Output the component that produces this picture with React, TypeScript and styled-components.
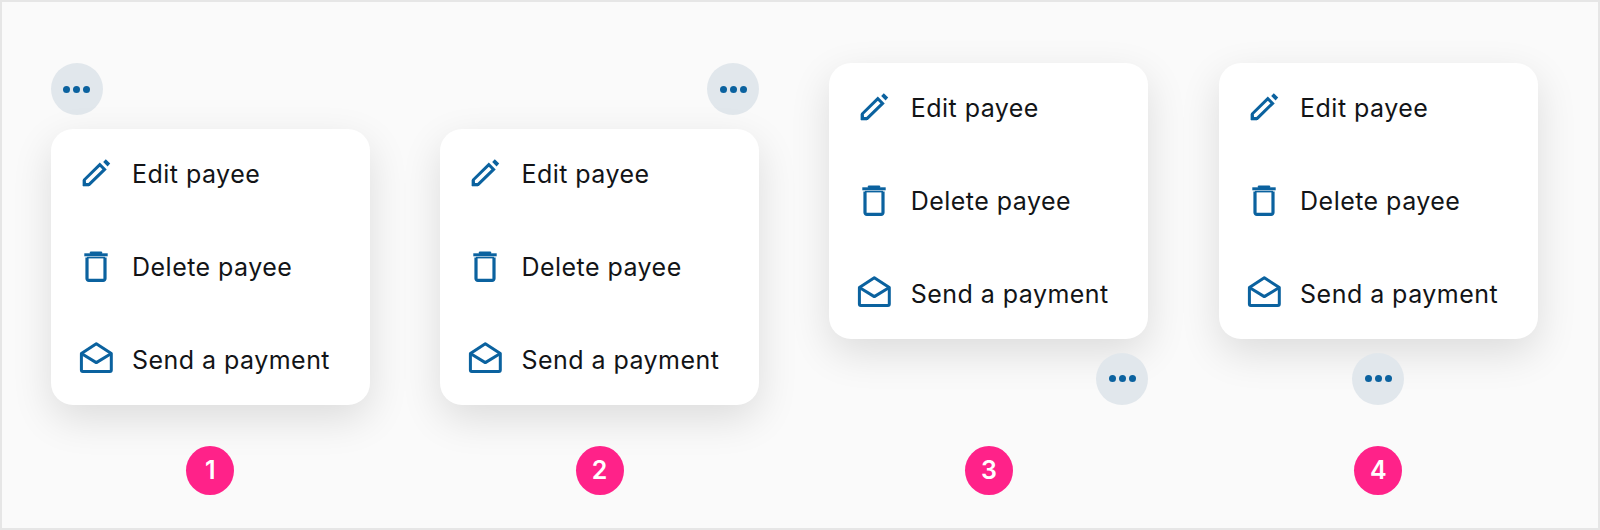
import React from "react";
import styled, { createGlobalStyle } from "styled-components";

const GlobalStyle = createGlobalStyle`
  html, body {
    margin: 0;
    padding: 0;
    background: #fafafa;
  }
`;

const Page = styled.div`
  box-sizing: border-box;
  width: 1600px;
  height: 530px;
  padding: 61.4px 0 0 48.7px;
  display: grid;
  grid-template-columns: repeat(4, 319px);
  column-gap: 70.35px;
  background: #fafafa;
  border: 2px solid #e6e6e6;
  font-family: Inter, "Liberation Sans", sans-serif;
`;

const Column = styled.div`
  display: flex;
  flex-direction: column;
  align-items: center;
`;

const Stack = styled.div<{ $reverse?: boolean }>`
  width: 100%;
  height: 341.5px;
  display: flex;
  flex-direction: ${(p) => (p.$reverse ? "column-reverse" : "column")};
  gap: 14px;
`;

const MoreButton = styled.div<{ $align: string }>`
  width: 52px;
  height: 52px;
  flex: none;
  align-self: ${(p) => p.$align};
  border-radius: 50%;
  background: #e1e7ec;
  display: flex;
  align-items: center;
  justify-content: center;
  gap: 3px;
`;

const Dot = styled.span`
  width: 7px;
  height: 7px;
  border-radius: 50%;
  background: #0b629f;
`;

const Card = styled.div`
  box-sizing: border-box;
  width: 319px;
  height: 275.5px;
  flex: none;
  padding: 23px 0;
  display: flex;
  flex-direction: column;
  justify-content: space-between;
  background: #ffffff;
  border-radius: 22px;
  box-shadow: 0 14px 40px rgba(0, 0, 0, 0.12);
`;

const Row = styled.div`
  height: 44px;
  padding-left: 27px;
  display: flex;
  align-items: center;
  gap: 18.4px;
`;

const IconSvg = styled.svg`
  width: 36px;
  height: 36px;
  flex: none;
  fill: none;
  stroke: #0b629f;
  stroke-width: 3;
`;

const Label = styled.span`
  font-size: 25px;
  line-height: 30px;
  color: #121417;
  letter-spacing: 0.46px;
`;

const Badge = styled.div`
  width: 48px;
  height: 49px;
  margin-top: 41px;
  border-radius: 50%;
  background: #ff2289;
  color: #ffffff;
  font-size: 25px;
  font-weight: 600;
  display: flex;
  align-items: center;
  justify-content: center;
`;

const PencilIcon = () => (
  <IconSvg viewBox="0 0 36 36">
    <path d="M6.4 28.4V23.8L21.8 8.6L26.6 13.4L11.2 28.4Z" />
    <path d="M5 30V24L11 30Z" fill="#0b629f" strokeWidth="0.6" />
    <path d="M25.2 6L27.8 3.2L32.2 7.6L29.6 10.4Z" fill="#0b629f" stroke="none" />
  </IconSvg>
);

const TrashIcon = () => (
  <IconSvg viewBox="0 0 36 36">
    <path d="M6.3 5.8H29.7" />
    <path d="M13 3.8H23" strokeWidth="2.6" strokeLinecap="round" />
    <path
      d="M9 8.5V29.5A1.8 1.8 0 0 0 10.8 31.3H25.2A1.8 1.8 0 0 0 27 29.5V8.5"
      strokeWidth="3.2"
    />
    <path d="M9 8.6H27" strokeWidth="1.6" />
  </IconSvg>
);

const MailIcon = () => (
  <IconSvg viewBox="0 0 36 36">
    <path
      d="M3.4 11.5L18.3 1.7L33.3 11.5V28A1.4 1.4 0 0 1 31.9 29.4H4.8A1.4 1.4 0 0 1 3.4 28Z"
      strokeLinejoin="round"
    />
    <path d="M3.4 11.5L18.3 20.6L33.3 11.5" strokeLinejoin="round" />
  </IconSvg>
);

const Menu = () => (
  <Card>
    <Row>
      <PencilIcon />
      <Label>Edit payee</Label>
    </Row>
    <Row>
      <TrashIcon />
      <Label>Delete payee</Label>
    </Row>
    <Row>
      <MailIcon />
      <Label>Send a payment</Label>
    </Row>
  </Card>
);

const variants = [
  { id: 1, align: "flex-start", reverse: false },
  { id: 2, align: "flex-end", reverse: false },
  { id: 3, align: "flex-end", reverse: true },
  { id: 4, align: "center", reverse: true },
];

const App = () => {
  return (
    <>
      <GlobalStyle />
      <Page>
        {variants.map((v) => (
          <Column key={v.id}>
            <Stack $reverse={v.reverse}>
              <MoreButton $align={v.align}>
                <Dot />
                <Dot />
                <Dot />
              </MoreButton>
              <Menu />
            </Stack>
            <Badge>{v.id}</Badge>
          </Column>
        ))}
      </Page>
    </>
  );
};

export default App;
